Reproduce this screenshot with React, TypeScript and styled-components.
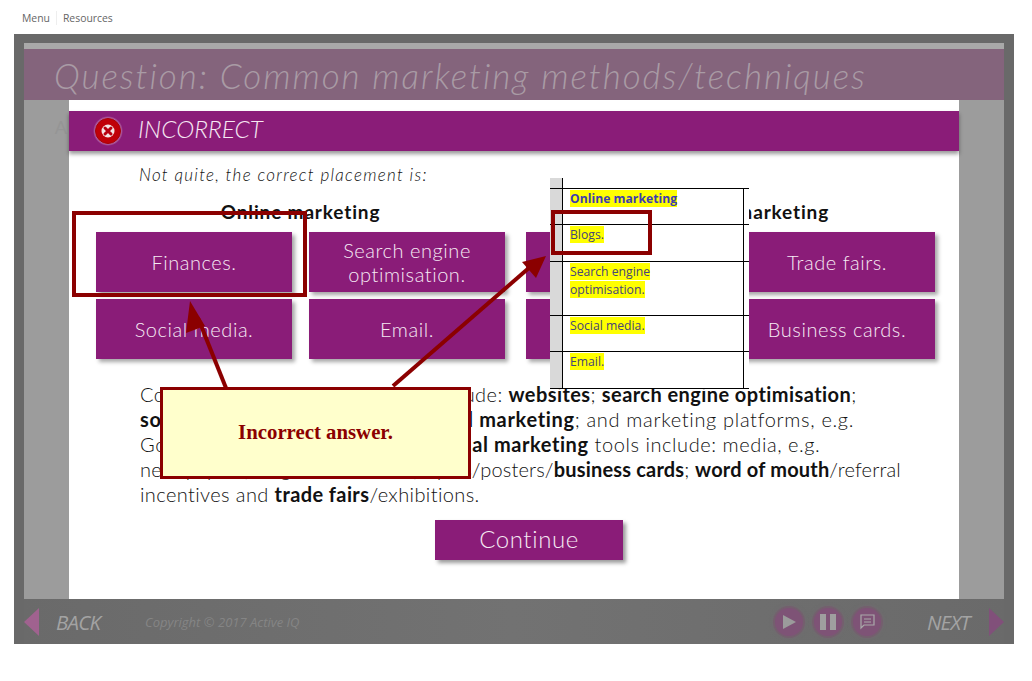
import React from "react";
import styled, { createGlobalStyle } from "styled-components";

const Global = createGlobalStyle`
  html, body { margin: 0; padding: 0; background: #fff; }
  body { font-family: "Lato", "Liberation Sans", sans-serif; }
`;
const Page = styled.div`position: relative; width: 1032px; height: 681px; overflow: hidden; background: #fff;`;
const TopNav = styled.nav`
  height: 34px; display: flex; align-items: center; padding: 2px 0 0 22px; box-sizing: border-box;
  font: 10.4px "Open Sans", sans-serif; color: #666;
`;
const NavItem = styled.span`
  padding-right: 6px; margin-right: 6px;
  &:not(:last-child) { border-right: 1px solid #eee; }
`;
const Player = styled.div`
  width: 1000px; height: 610px; margin-left: 14px; box-sizing: border-box; padding: 9px 10px 0;
  background: #696969; display: flex; flex-direction: column;
`;
const Slide = styled.div`height: 556px; display: flex; flex-direction: column; background: #9c9c9c;`;
const Strip = styled.div`height: 6px; background: #a9a9a9;`;
const TitleBand = styled.div`
  height: 51px; background: #84647c; padding-left: 30px; display: flex; align-items: center;
`;
const Title = styled.h1`
  margin: 0; font: italic 300 35px "Lato", sans-serif; letter-spacing: 1.95px; color: #a99ba5; white-space: nowrap;
`;
const Body = styled.div`flex: 1; display: flex;`;
const Gutter = styled.div`
  width: 45px; box-sizing: border-box; padding: 16px 2px 0 0; text-align: right;
  font: 18px "Lato", sans-serif; color: #959595;
`;
const Panel = styled.main`width: 890px; background: #fff; padding-top: 11px; box-sizing: border-box;`;
const HeaderBar = styled.div`
  height: 40px; background: #8a1c78; display: flex; align-items: center; gap: 15px; padding-left: 24px;
  box-shadow: 0 3px 4px rgba(0,0,0,.4);
`;
const HeaderText = styled.div`font: italic 300 24.4px/30px "Lato", sans-serif; color: #f6e8f3; margin-top: -4px;`;
const Prompt = styled.p`
  margin: 14px 0 0 70px; font: italic 300 17px/20px "Lato", sans-serif; letter-spacing: 1.28px; color: #111;
`;
const Boards = styled.div`display: flex; gap: 21px; margin: 17px 0 0 27px;`;
const Group = styled.section`width: 409px;`;
const GroupTitle = styled.h2`
  margin: 0 0 10px; height: 20px; font: 700 19px/20px "Lato", sans-serif; color: #111; text-align: center; letter-spacing: .85px;
`;
const Cards = styled.div`display: grid; grid-template-columns: 196px 196px; grid-auto-rows: 60px; gap: 7px 17px;`;
const Card = styled.div`
  background: #8a1c78; color: #f6eaf4; display: flex; align-items: center; justify-content: center; text-align: center;
  font: 300 20px/24px "Lato", sans-serif; letter-spacing: .55px; box-shadow: 3px 3px 4px rgba(0,0,0,.35);
`;
const Paragraph = styled.div`margin: 23px 0 0 71px; font: 300 20px/25px "Lato", sans-serif; color: #111;`;
const Line = styled.div<{ $s: number }>`white-space: nowrap; letter-spacing: ${p => p.$s}px; b { font-weight: 700; color: #111; }`;
const Continue = styled.button`
  display: block; margin: 13px 0 0 366px; width: 188px; height: 40px; border: 0; background: #8a1c78; color: #f6eaf4;
  font: 300 24px/38px "Lato", sans-serif; letter-spacing: .6px; box-shadow: 3px 3px 4px rgba(0,0,0,.4); padding: 0 0 2px;
`;
const Footer = styled.footer`
  height: 45px; display: flex; align-items: center; color: #a0a0a0; background: linear-gradient(90deg, #6a6a6a, #727272 50%, #6a6a6a);
`;
const NavLabel = styled.span<{ $w: number }>`font: italic 20.5px "Open Sans", sans-serif; letter-spacing: -.8px; width: ${p => p.$w}px; color: #a3a3a3; padding-top: 1px;`;
const Copy = styled.span`font: italic 13px "Open Sans", sans-serif; color: #858585; flex: 1; padding-top: 1px;`;
const Controls = styled.div`display: flex; gap: 11px; margin-right: 46px;`;
const Round = styled.div`
  width: 28px; height: 28px; border-radius: 50%; background: #7e5376; box-shadow: 0 0 0 2px #745f6e, 0 0 3px 3px #716b70;
  display: flex; align-items: center; justify-content: center;
`;
const Overlay = styled.div`position: absolute; left: 0; top: 0; width: 1032px; height: 681px; pointer-events: none;`;
const Arrows = styled.svg`position: absolute; left: 0; top: 0;`;
const RedFrame = styled.div<{ $x: number; $y: number; $w: number; $h: number }>`
  position: absolute; left: ${p => p.$x}px; top: ${p => p.$y}px; width: ${p => p.$w}px; height: ${p => p.$h}px;
  box-sizing: border-box; border: 4px solid #8b0000;
`;
const Callout = styled.div`
  position: absolute; left: 160px; top: 387px; width: 311px; height: 92px; box-sizing: border-box;
  border: 3px solid #8b0000; background: #ffffcc; display: flex; align-items: center; justify-content: center;
  font: 700 20.8px "Liberation Serif", serif; color: #8b0000; padding-bottom: 3px;
`;
const Sheet = styled.div`
  position: absolute; left: 550px; top: 178px; width: 199px; background: #fff; border-bottom: 1px solid #000;
  font: 12.2px/18px "Open Sans", sans-serif; color: #45457a;
`;
const SheetRow = styled.div<{ $h: number; $top?: boolean }>`
  height: ${p => p.$h}px; display: flex; box-sizing: border-box; ${p => (p.$top ? "" : "border-top: 1px solid #000;")}
`;
const SheetGutter = styled.div`width: 12px; background: #d9d9d9; border-right: 1px solid #000; margin-right: 7px;`;
const SheetCell = styled.div`width: 173px; padding-top: 1px; border-right: 1px solid #000;`;
const Mark = styled.span<{ $head?: boolean }>`
  background: #ffff00; font-weight: ${p => (p.$head ? 700 : 400)}; color: ${p => (p.$head ? "#3d3db0" : "#45457a")};
`;

const rows: [number, string[], boolean?][] = [
  [36, ["Online marketing"], true],
  [37, ["Blogs."]],
  [54, ["Search engine", "optimisation."]],
  [36, ["Social media."]],
  [37, ["Email."]],
];

export default function App() {
  return (
    <Page>
      <Global />
      <TopNav>
        <NavItem>Menu</NavItem>
        <NavItem>Resources</NavItem>
      </TopNav>
      <Player>
        <Slide>
          <Strip />
          <TitleBand>
            <Title>Question: Common marketing methods/techniques</Title>
          </TitleBand>
          <Body>
            <Gutter>A</Gutter>
            <Panel>
              <HeaderBar>
                <svg width="30" height="30" viewBox="0 0 30 30">
                  <defs>
                    <radialGradient id="glow">
                      <stop offset="75%" stopColor="#d8a8cf" />
                      <stop offset="100%" stopColor="#8a1c78" />
                    </radialGradient>
                  </defs>
                  <circle cx="15" cy="15" r="15" fill="url(#glow)" />
                  <circle cx="15" cy="15" r="12.5" fill="#c00008" stroke="#a50008" />
                  <circle cx="15" cy="15" r="6.5" fill="#f4e4e4" />
                  <path d="M12 12l6 6M18 12l-6 6" stroke="#b80010" strokeWidth="3" strokeLinecap="round" />
                </svg>
                <HeaderText>INCORRECT</HeaderText>
              </HeaderBar>
              <Prompt>Not quite, the correct placement is:</Prompt>
              <Boards>
                <Group>
                  <GroupTitle>Online marketing</GroupTitle>
                  <Cards>
                    <Card>Finances.</Card>
                    <Card>Search engine<br />optimisation.</Card>
                    <Card>Social media.</Card>
                    <Card>Email.</Card>
                  </Cards>
                </Group>
                <Group>
                  <GroupTitle>Traditional marketing</GroupTitle>
                  <Cards>
                    <Card>Blogs.</Card>
                    <Card>Trade fairs.</Card>
                    <Card>Leaflets.</Card>
                    <Card>Business cards.</Card>
                  </Cards>
                </Group>
              </Boards>
              <Paragraph>
                <Line $s={0.43}>Common online marketing tools include: <b>websites</b>; <b>search engine optimisation</b>;</Line>
                <Line $s={0.67}><b>social media</b>; <b>blogs</b>; <b>PR</b>; <b>email</b>; <b>viral marketing</b>; and marketing platforms, e.g.</Line>
                <Line $s={0.57}>Google and Facebook Ads. <b>Traditional marketing</b> tools include: media, e.g.</Line>
                <Line $s={0.18}>newspapers, magazines and TV; flyers/posters/<b>business cards</b>; <b>word of mouth</b>/referral</Line>
                <Line $s={0.4}>incentives and <b>trade fairs</b>/exhibitions.</Line>
              </Paragraph>
              <Continue>Continue</Continue>
            </Panel>
          </Body>
        </Slide>
        <Footer>
          <svg width="32" height="30" viewBox="0 0 32 30"><path d="M0 15L15 1v28z" fill="#a0628f" /></svg>
          <NavLabel $w={89}>BACK</NavLabel>
          <Copy>Copyright © 2017 Active IQ</Copy>
          <Controls>
            <Round>
              <svg width="16" height="16" viewBox="0 0 16 16"><path d="M2 1l13 7-13 7z" fill="#9b9b9b" /></svg>
            </Round>
            <Round>
              <svg width="18" height="18" viewBox="0 0 18 18"><path d="M1 1h6v16H1zM11 1h6v16h-6z" fill="#9f9f9f" /></svg>
            </Round>
            <Round>
              <svg width="18" height="18" viewBox="0 0 18 18" fill="none" stroke="#a9a9a9" strokeWidth="1.2"><path d="M3 2h13v10H6l-3 3zM6 6h7M6 9h7" /></svg>
            </Round>
          </Controls>
          <NavLabel $w={62}>NEXT</NavLabel>
          <svg width="15" height="30" viewBox="0 0 15 30"><path d="M15 15L0 1v28z" fill="#81507a" /></svg>
        </Footer>
      </Player>
      <Overlay>
        <Sheet>
          <SheetRow $h={10} $top>
            <SheetGutter />
          </SheetRow>
          {rows.map(([h, lines, head], i) => (
            <SheetRow key={i} $h={h}>
              <SheetGutter />
              <SheetCell>
                {lines.map(l => (
                  <div key={l}><Mark $head={head}>{l}</Mark></div>
                ))}
              </SheetCell>
            </SheetRow>
          ))}
        </Sheet>
        <Arrows width="1032" height="681" viewBox="0 0 1032 681">
          <path d="M226 388L198 318" stroke="#8b0000" strokeWidth="4" />
          <path d="M190 301L205 326L186 333z" fill="#8b0000" />
          <path d="M393 386L530 267" stroke="#8b0000" strokeWidth="4" />
          <path d="M546 256L536 278L522 262z" fill="#8b0000" />
        </Arrows>
        <RedFrame $x={72} $y={211} $w={235} $h={86} />
        <RedFrame $x={551} $y={210} $w={101} $h={45} />
        <Callout>Incorrect answer.</Callout>
      </Overlay>
    </Page>
  );
}
